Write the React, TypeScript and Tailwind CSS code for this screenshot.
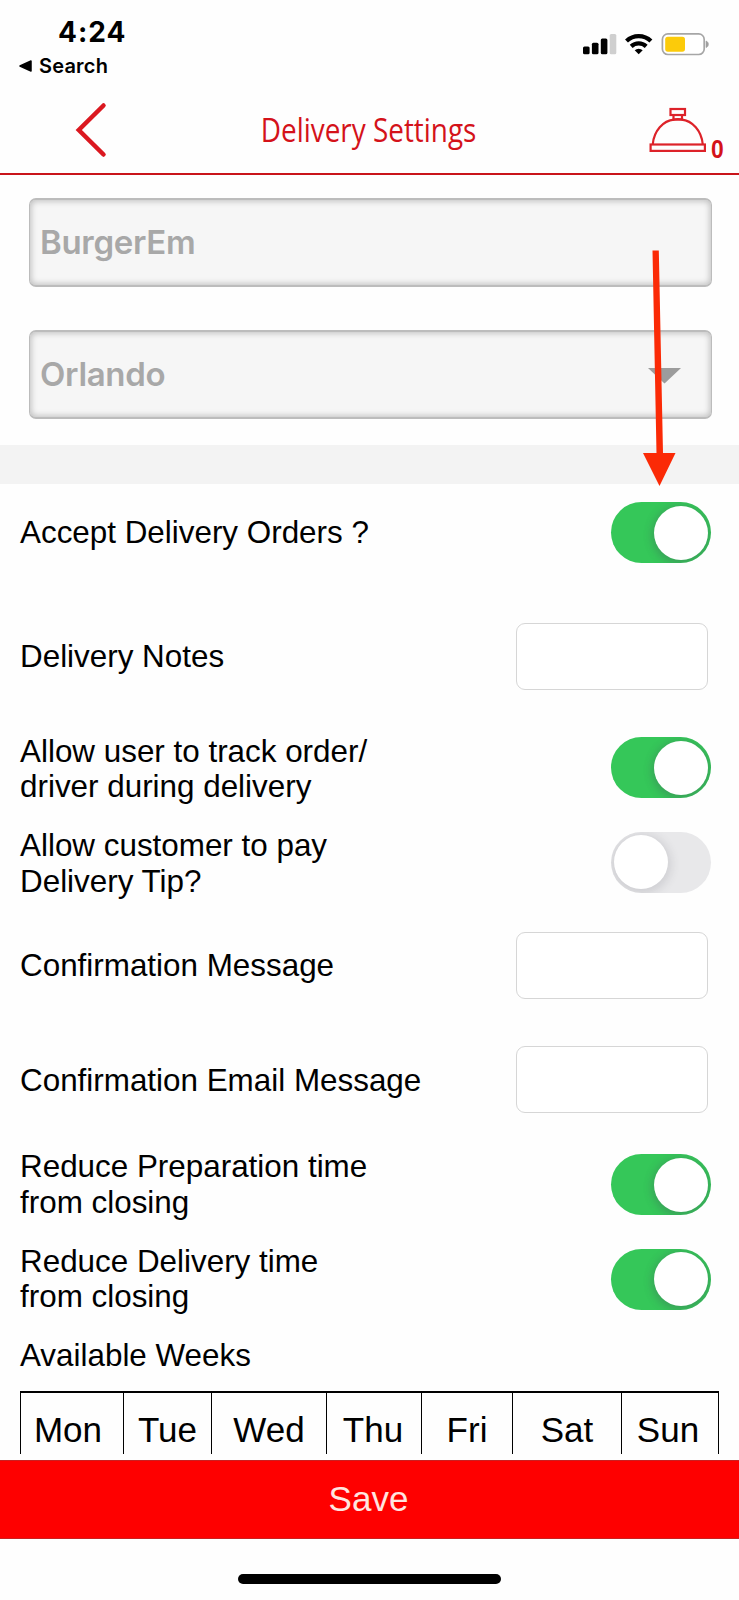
import React, { useState } from 'react';

type SettingRow = {
  id: string;
  label: string[];
  control: 'switch' | 'input';
  className: string;
  labelClassName?: string;
};

const ROWS: SettingRow[] = [
  { id: 'accept', label: ['Accept Delivery Orders ?'], control: 'switch', className: 'h-[97px] mb-[12px]' },
  { id: 'notes', label: ['Delivery Notes'], control: 'input', className: 'h-[127px]' },
  { id: 'track', label: ['Allow user to track order/', 'driver during delivery'], control: 'switch', className: 'h-[95px]', labelClassName: 'pt-[3px]' },
  { id: 'tip', label: ['Allow customer to pay', 'Delivery Tip?'], control: 'switch', className: 'h-[94px]', labelClassName: 'pt-[3px]' },
  { id: 'message', label: ['Confirmation Message'], control: 'input', className: 'h-[113px]' },
  { id: 'email', label: ['Confirmation Email Message'], control: 'input', className: 'h-[115px]', labelClassName: 'pt-[3px]' },
  { id: 'preparation', label: ['Reduce Preparation time', 'from closing'], control: 'switch', className: 'h-[95px]' },
  { id: 'delivery', label: ['Reduce Delivery time', 'from closing'], control: 'switch', className: 'h-[94px]' },
];

const DAYS = [
  { name: 'Mon', className: 'w-[103px] pr-[8px]' },
  { name: 'Tue', className: 'w-[88px]' },
  { name: 'Wed', className: 'w-[115px]' },
  { name: 'Thu', className: 'w-[95px] pr-[2px]' },
  { name: 'Fri', className: 'w-[91px]' },
  { name: 'Sat', className: 'w-[109px]' },
  { name: 'Sun', className: 'w-[97px] pr-[4px]' },
];

const StatusBar: React.FC = () => (
  <div className="h-[84px] flex justify-between font-['Inter'] text-black">
    <div className="pl-[18px] pt-[15px]">
      <div className="pl-[40px] text-[28px] leading-[34px] font-bold tracking-[1px]">4:24</div>
      <div className="flex items-center gap-[7px] mt-[2px] text-[20px] leading-[30px] font-semibold tracking-[0.2px]">
        <svg className="w-[14px] h-[12px]" viewBox="0 0 14 12">
          <path d="M2 6 13 1v10z" fill="#000" stroke="#000" strokeWidth="1.5" strokeLinejoin="round" />
        </svg>
        Search
      </div>
    </div>

    <div className="flex items-start gap-[8px] pt-[33px] pr-[29px]">
      <svg className="w-[34px] h-[22px]" viewBox="0 0 34 22">
        <rect x="0" y="13.6" width="6.6" height="7.6" rx="1.5" />
        <rect x="8.9" y="9.8" width="6.6" height="11.4" rx="1.5" />
        <rect x="17.8" y="5.5" width="6.6" height="15.7" rx="1.5" />
        <rect x="26.7" y="1" width="6.6" height="20.2" rx="1.5" fill="#cfcfcf" />
      </svg>
      <svg className="w-[28px] h-[22px]" viewBox="0 0 28 22" fill="none" stroke="#000" strokeWidth="4.2">
        <path d="M1.5 8a17.6 17.6 0 0 1 24.4 0" />
        <path d="M6.2 13.4a11 11 0 0 1 15 0" />
        <path d="M13.7 21.2 9.7 17.3a5.8 5.8 0 0 1 8 0z" fill="#000" stroke="none" />
      </svg>
      <svg className="w-[49px] h-[23px]" viewBox="0 0 49 23">
        <rect x="1.4" y="0.9" width="41.8" height="20.6" rx="5.5" fill="#fff" stroke="#a6a6a6" strokeWidth="1.7" />
        <rect x="4.2" y="3.7" width="19.8" height="15" rx="2.6" fill="#fccb0a" />
        <path d="M45 8v6.6c3.2-1 3.2-5.6 0-6.6z" fill="#a0a0a0" stroke="#a0a0a0" strokeWidth="0.6" />
      </svg>
    </div>
  </div>
);

const Header: React.FC = () => (
  <div className="h-[91px] flex items-start justify-between border-b-2 border-[#c9141a] text-[#d4121a]">
    <button className="ml-[75px] mt-[17px] w-[170px]">
      <svg className="w-[32px] h-[58px]" viewBox="0 0 32 58" fill="none" stroke="#db1820" strokeWidth="4.5" strokeLinecap="round">
        <path d="M28.5 4.5 3.8 29 28.5 53.5" />
      </svg>
    </button>
    <h1 className="w-[260px] mt-[23px] flex justify-center whitespace-nowrap font-['Open_Sans'] text-[33px] leading-[46px]">
      <span className="scale-x-[0.845]">Delivery Settings</span>
    </h1>
    <div className="w-[245px] pl-[153px] flex items-start">
      <svg className="w-[58px] h-[48px] mt-[22px]" viewBox="0 0 58 48" fill="none" stroke="#dd2229" strokeWidth="2.2">
        <rect x="21.5" y="3" width="14.5" height="6" />
        <path d="M24.5 9v4M33 9v4" />
        <path d="M23.5 14c3.5-1.3 7.5-1.3 11 0" />
        <path d="M3.8 38C5 25 14 14.5 25 13.6h7.5C43.5 14.5 52.5 25 53.7 38" />
        <rect x="1.6" y="38.5" width="54.3" height="6.4" />
      </svg>
      <span className="mt-[49px] ml-[4px] font-['Liberation_Sans'] text-[26px] leading-[32px] font-bold scale-x-[0.88] origin-left">0</span>
    </div>
  </div>
);

const SelectBox: React.FC<{ value: string; caret?: boolean }> = ({ value, caret }) => (
  <div className="h-[89px] flex items-center justify-between pl-[10px] pr-[30px] rounded-[7px] border-y-2 border-x border-[#bcbcbc] bg-[#f6f6f6] shadow-[inset_0_0_6px_1px_rgba(0,0,0,0.24)]">
    <span className="pb-[2px] font-['Inter'] text-[33px] leading-[40px] font-semibold tracking-[-0.3px] text-[#a8a8a8]">{value}</span>
    {caret && (
      <svg className="w-[33px] h-[16px] mt-[3px]" viewBox="0 0 33 16">
        <path d="M0 0h33L16.5 15.5z" fill="#9c9c9c" />
      </svg>
    )}
  </div>
);

const Switch: React.FC<{ on: boolean; onToggle: () => void }> = ({ on, onToggle }) => (
  <button
    role="switch"
    aria-checked={on}
    onClick={onToggle}
    className={`w-[100px] h-[61px] mr-[28px] p-[3px] flex items-center rounded-full overflow-hidden ${
      on ? 'justify-end bg-[#35c759]' : 'justify-start bg-[#e8e8ea]'
    }`}
  >
    <span
      className={`w-[54px] h-[54px] rounded-full bg-white ${
        on ? 'shadow-[0_2px_8px_2px_rgba(70,70,90,0.3)]' : 'shadow-[0_2px_10px_3px_rgba(60,60,70,0.14)]'
      }`}
    />
  </button>
);

export default function App() {
  const [switches, setSwitches] = useState<Record<string, boolean>>({
    accept: true,
    track: true,
    tip: false,
    preparation: true,
    delivery: true,
  });

  const toggle = (id: string) => setSwitches(prev => ({ ...prev, [id]: !prev[id] }));

  return (
    <div className="relative w-[739px] h-[1600px] flex flex-col bg-[#fefefe] overflow-hidden font-['Liberation_Sans',sans-serif] text-black">
      <StatusBar />
      <Header />

      <div className="h-[270px] pt-[23px] pl-[29px] pr-[27px] flex flex-col gap-[43px]">
        <SelectBox value="BurgerEm" />
        <SelectBox value="Orlando" caret />
      </div>

      <div className="h-[39px] bg-[#f3f3f3]" />

      <div className="flex flex-col">
        {ROWS.map(row => (
          <div key={row.id} className={`pl-[20px] flex items-center justify-between ${row.className}`}>
            <div className={`text-[31.4px] leading-[35.5px] whitespace-nowrap ${row.labelClassName ?? ''}`}>
              {row.label.map(line => (
                <div key={line}>{line}</div>
              ))}
            </div>
            {row.control === 'switch' ? (
              <Switch on={switches[row.id]} onToggle={() => toggle(row.id)} />
            ) : (
              <input className="w-[192px] h-[67px] mr-[31px] px-3 rounded-[9px] border border-[#d6d6d6] bg-white" />
            )}
          </div>
        ))}
      </div>

      <div className="h-[65px] pl-[20px] text-[31.4px] leading-[60px]">Available Weeks</div>

      {/* Дни недели */}
      <div className="h-[63px] ml-[20px] w-[699px] flex border-t-2 border-l border-black">
        {DAYS.map(day => (
          <div key={day.name} className={`flex justify-center border-r border-black text-[35px] leading-[73px] ${day.className}`}>
            {day.name}
          </div>
        ))}
      </div>

      <button className="mt-[6px] h-[79px] shrink-0 pr-[2px] bg-[#fe0000] border-y border-[#c92020] text-[35px] text-[#ffe5e0]">Save</button>
      <div className="mt-[35px] mx-auto w-[263px] h-[10px] shrink-0 rounded-full bg-black" />

      {/* Стрелка поверх формы */}
      <svg className="absolute left-[640px] top-[248px] w-[40px] h-[242px] pointer-events-none" viewBox="0 0 40 242">
        <path d="M12.5 2.5h6.3L23 205h12.5L19.5 238 3 205h13.5z" fill="#fb2a06" />
      </svg>
    </div>
  );
}
